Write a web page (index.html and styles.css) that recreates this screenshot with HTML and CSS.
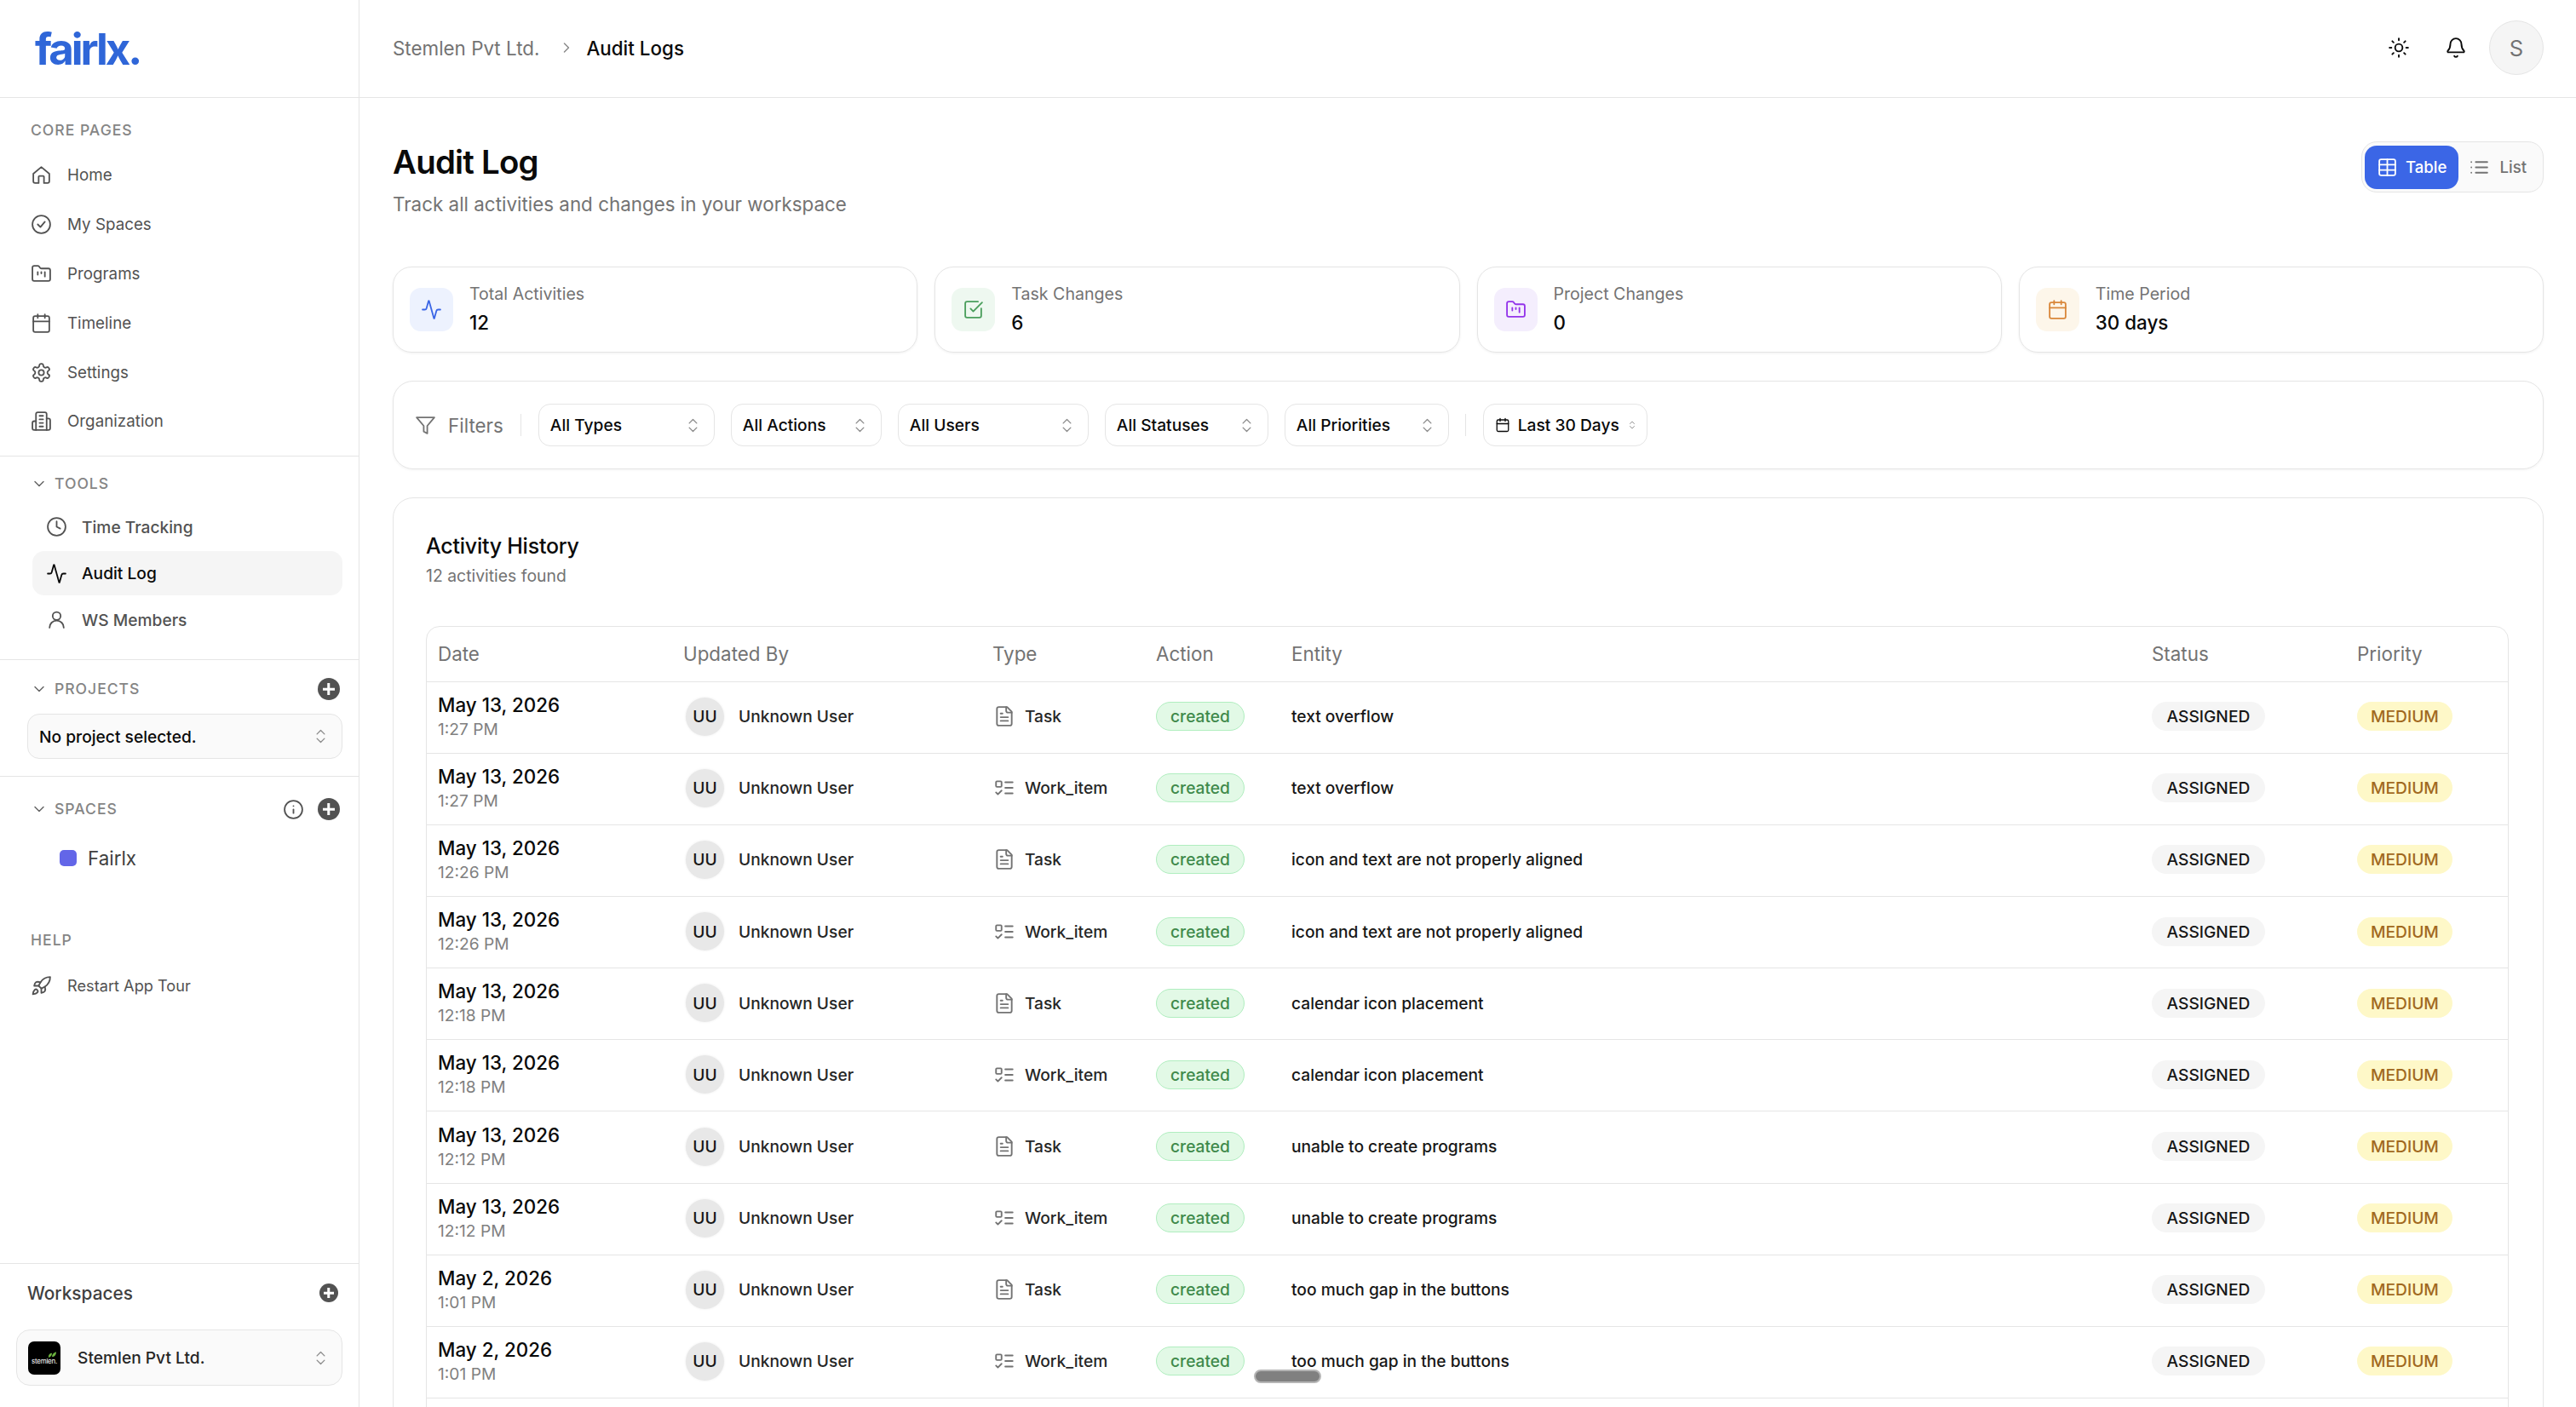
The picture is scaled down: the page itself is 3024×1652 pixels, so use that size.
FILE: index.html
```html
<!DOCTYPE html>
<html lang="en">
<head>
  <meta charset="UTF-8" />
  <title>Audit Log</title>
  <link rel="stylesheet" href="styles.css">
</head>
<body>
  <svg class="sprites" aria-hidden="true">
    <symbol id="i-home" viewBox="0 0 24 24"><path d="M3 10.5 12 3l9 7.5V19a2 2 0 0 1-2 2h-4v-7a1 1 0 0 0-1-1h-4a1 1 0 0 0-1 1v7H5a2 2 0 0 1-2-2z"/></symbol>
    <symbol id="i-check-circle" viewBox="0 0 24 24"><circle cx="12" cy="12" r="10"/><path d="m8 12 3 3 5-6"/></symbol>
    <symbol id="i-folder" viewBox="0 0 24 24"><path d="M4 20h16a2 2 0 0 0 2-2V8a2 2 0 0 0-2-2h-7.93a2 2 0 0 1-1.66-.9l-.82-1.2A2 2 0 0 0 7.93 3H4a2 2 0 0 0-2 2v13c0 1.1.9 2 2 2Z"/><path d="M8 10v3"/><path d="M12 10v1.5"/><path d="M16 10v5"/></symbol>
    <symbol id="i-calendar" viewBox="0 0 24 24"><path d="M8 2v4"/><path d="M16 2v4"/><rect x="3" y="4" width="18" height="18" rx="2"/><path d="M3 10h18"/></symbol>
    <symbol id="i-settings" viewBox="0 0 24 24"><path d="M12.22 2h-.44a2 2 0 0 0-2 2v.18a2 2 0 0 1-1 1.73l-.43.25a2 2 0 0 1-2 0l-.15-.08a2 2 0 0 0-2.73.73l-.22.38a2 2 0 0 0 .73 2.73l.15.1a2 2 0 0 1 1 1.72v.51a2 2 0 0 1-1 1.74l-.15.09a2 2 0 0 0-.73 2.73l.22.38a2 2 0 0 0 2.73.73l.15-.08a2 2 0 0 1 2 0l.43.25a2 2 0 0 1 1 1.73V20a2 2 0 0 0 2 2h.44a2 2 0 0 0 2-2v-.18a2 2 0 0 1 1-1.73l.43-.25a2 2 0 0 1 2 0l.15.08a2 2 0 0 0 2.73-.73l.22-.39a2 2 0 0 0-.73-2.73l-.15-.08a2 2 0 0 1-1-1.74v-.5a2 2 0 0 1 1-1.74l.15-.09a2 2 0 0 0 .73-2.73l-.22-.38a2 2 0 0 0-2.73-.73l-.15.08a2 2 0 0 1-2 0l-.43-.25a2 2 0 0 1-1-1.73V4a2 2 0 0 0-2-2z"/><circle cx="12" cy="12" r="3"/></symbol>
    <symbol id="i-building" viewBox="0 0 24 24"><path d="M6 22V4a2 2 0 0 1 2-2h8a2 2 0 0 1 2 2v18Z"/><path d="M6 12H4a2 2 0 0 0-2 2v6a2 2 0 0 0 2 2h2"/><path d="M18 9h2a2 2 0 0 1 2 2v9a2 2 0 0 1-2 2h-2"/><path d="M10 6h4"/><path d="M10 10h4"/><path d="M10 14h4"/><path d="M10 18h4"/></symbol>
    <symbol id="i-clock" viewBox="0 0 24 24"><circle cx="12" cy="12" r="10"/><path d="M12 6v6l4 2"/></symbol>
    <symbol id="i-activity" viewBox="0 0 24 24"><path d="M22 12h-2.48a2 2 0 0 0-1.93 1.46l-2.35 8.36a.25.25 0 0 1-.48 0L9.24 2.18a.25.25 0 0 0-.48 0l-2.35 8.36A2 2 0 0 1 4.49 12H2"/></symbol>
    <symbol id="i-user" viewBox="0 0 24 24"><circle cx="12" cy="8" r="4.5"/><path d="M20 21a8 8 0 0 0-16 0"/></symbol>
    <symbol id="i-rocket" viewBox="0 0 24 24"><path d="M4.5 16.5c-1.5 1.26-2 5-2 5s3.74-.5 5-2c.71-.84.7-2.13-.09-2.91a2.18 2.18 0 0 0-2.91-.09z"/><path d="m12 15-3-3a22 22 0 0 1 2-3.95A12.88 12.88 0 0 1 22 2c0 2.72-.78 7.5-6 11a22.35 22.35 0 0 1-4 2z"/><path d="M9 12H4s.55-3.03 2-4c1.62-1.08 5 0 5 0"/><path d="M12 15v5s3.03-.55 4-2c1.08-1.62 0-5 0-5"/></symbol>
    <symbol id="i-chev-down" viewBox="0 0 24 24"><path d="m6 9 6 6 6-6"/></symbol>
    <symbol id="i-chev-right" viewBox="0 0 24 24"><path d="m9 18 6-6-6-6"/></symbol>
    <symbol id="i-updown" viewBox="0 0 24 24"><path d="m7 15 5 5 5-5"/><path d="m7 9 5-5 5 5"/></symbol>
    <symbol id="i-info" viewBox="0 0 24 24"><circle cx="12" cy="12" r="10"/><path d="M12 16v-4"/><path d="M12 8h.01"/></symbol>
    <symbol id="i-sun" viewBox="0 0 24 24"><circle cx="12" cy="12" r="4"/><path d="M12 2v2"/><path d="M12 20v2"/><path d="m4.93 4.93 1.41 1.41"/><path d="m17.66 17.66 1.41 1.41"/><path d="M2 12h2"/><path d="M20 12h2"/><path d="m6.34 17.66-1.41 1.41"/><path d="m19.07 4.93-1.41 1.41"/></symbol>
    <symbol id="i-bell" viewBox="0 0 24 24"><path d="M10.268 21a2 2 0 0 0 3.464 0"/><path d="M3.262 15.326A1 1 0 0 0 4 17h16a1 1 0 0 0 .74-1.673C19.41 13.956 18 12.499 18 8A6 6 0 0 0 6 8c0 4.499-1.411 5.956-2.738 7.326"/></symbol>
    <symbol id="i-table" viewBox="0 0 24 24"><path d="M12 3v18"/><rect x="3" y="3" width="18" height="18" rx="2"/><path d="M3 9h18"/><path d="M3 15h18"/></symbol>
    <symbol id="i-list" viewBox="0 0 24 24"><path d="M3 6h.01"/><path d="M3 12h.01"/><path d="M3 18h.01"/><path d="M8 6h13"/><path d="M8 12h13"/><path d="M8 18h13"/></symbol>
    <symbol id="i-square-check" viewBox="0 0 24 24"><path d="M21 10.656V19a2 2 0 0 1-2 2H5a2 2 0 0 1-2-2V5a2 2 0 0 1 2-2h12.344"/><path d="m9 11 3 3L22 4"/></symbol>
    <symbol id="i-funnel" viewBox="0 0 24 24"><path d="M22 3H2l8 9.46V19l4 2v-8.54z"/></symbol>
    <symbol id="i-file" viewBox="0 0 24 24"><path d="M15 2H6a2 2 0 0 0-2 2v16a2 2 0 0 0 2 2h12a2 2 0 0 0 2-2V7Z"/><path d="M14 2v4a2 2 0 0 0 2 2h4"/><path d="M10 9H8"/><path d="M16 13H8"/><path d="M16 17H8"/></symbol>
    <symbol id="i-todo" viewBox="0 0 24 24"><rect x="3" y="5" width="6" height="6" rx="1"/><path d="m3 17 2 2 4-4"/><path d="M13 6h8"/><path d="M13 12h8"/><path d="M13 18h8"/></symbol>
  </svg>

  <div class="app">
    <aside class="sidebar">
      <div class="brand"><span class="brand-name">fairlx.</span></div>

      <section class="side-section core">
        <div class="side-label">CORE PAGES</div>
        <a class="nav-item"><svg class="icon"><use href="#i-home"/></svg>Home</a>
        <a class="nav-item"><svg class="icon"><use href="#i-check-circle"/></svg>My Spaces</a>
        <a class="nav-item"><svg class="icon"><use href="#i-folder"/></svg>Programs</a>
        <a class="nav-item"><svg class="icon"><use href="#i-calendar"/></svg>Timeline</a>
        <a class="nav-item"><svg class="icon"><use href="#i-settings"/></svg>Settings</a>
        <a class="nav-item"><svg class="icon"><use href="#i-building"/></svg>Organization</a>
      </section>

      <section class="side-section tools">
        <div class="side-head"><svg class="icon chev"><use href="#i-chev-down"/></svg><span class="side-label">TOOLS</span></div>
        <a class="tool-item"><svg class="icon"><use href="#i-clock"/></svg>Time Tracking</a>
        <a class="tool-item active"><svg class="icon"><use href="#i-activity"/></svg>Audit Log</a>
        <a class="tool-item"><svg class="icon"><use href="#i-user"/></svg>WS Members</a>
      </section>

      <section class="side-section projects">
        <div class="side-head">
          <svg class="icon chev"><use href="#i-chev-down"/></svg><span class="side-label">PROJECTS</span>
          <span class="plus-btn"></span>
        </div>
        <div class="side-select"><span>No project selected.</span><svg class="icon updown"><use href="#i-updown"/></svg></div>
      </section>

      <section class="side-section spaces">
        <div class="side-head">
          <svg class="icon chev"><use href="#i-chev-down"/></svg><span class="side-label">SPACES</span>
          <svg class="icon info"><use href="#i-info"/></svg>
          <span class="plus-btn"></span>
        </div>
        <div class="space-row"><span class="space-dot"></span>Fairlx</div>
      </section>

      <section class="side-section help">
        <div class="side-label">HELP</div>
        <a class="nav-item"><svg class="icon"><use href="#i-rocket"/></svg>Restart App Tour</a>
      </section>

      <section class="workspaces">
        <div class="ws-head"><span>Workspaces</span><span class="plus-btn small"></span></div>
        <div class="ws-select">
          <span class="ws-logo">
            <svg class="leaf" viewBox="0 0 12 8"><path d="M1 8C1 4 3 2 6 2 6 5 4 8 1 8Z"/><path d="M6 7c0-3 2-6 6-7 0 4-2 7-6 7Z"/></svg>
            <span class="ws-logo-text">stemlen.</span>
          </span>
          <span class="ws-name">Stemlen Pvt Ltd.</span>
          <svg class="icon updown"><use href="#i-updown"/></svg>
        </div>
      </section>
    </aside>

    <main class="main">
      <header class="topbar">
        <nav class="crumbs">
          <span class="crumb">Stemlen Pvt Ltd.</span>
          <svg class="icon crumb-sep"><use href="#i-chev-right"/></svg>
          <span class="crumb current">Audit Logs</span>
        </nav>
        <div class="top-actions">
          <svg class="icon top-icon"><use href="#i-sun"/></svg>
          <svg class="icon top-icon"><use href="#i-bell"/></svg>
          <span class="user-avatar">S</span>
        </div>
      </header>

      <div class="content">
        <div class="page-head">
          <div>
            <h1>Audit Log</h1>
            <p class="page-sub">Track all activities and changes in your workspace</p>
          </div>
          <div class="view-toggle">
            <span class="view-btn active"><svg class="icon"><use href="#i-table"/></svg>Table</span>
            <span class="view-btn"><svg class="icon"><use href="#i-list"/></svg>List</span>
          </div>
        </div>

        <div class="stats">
          <div class="stat-card">
            <span class="stat-icon blue"><svg class="icon"><use href="#i-activity"/></svg></span>
            <div><div class="stat-label">Total Activities</div><div class="stat-value">12</div></div>
          </div>
          <div class="stat-card">
            <span class="stat-icon green"><svg class="icon"><use href="#i-square-check"/></svg></span>
            <div><div class="stat-label">Task Changes</div><div class="stat-value">6</div></div>
          </div>
          <div class="stat-card">
            <span class="stat-icon purple"><svg class="icon"><use href="#i-folder"/></svg></span>
            <div><div class="stat-label">Project Changes</div><div class="stat-value">0</div></div>
          </div>
          <div class="stat-card">
            <span class="stat-icon orange"><svg class="icon"><use href="#i-calendar"/></svg></span>
            <div><div class="stat-label">Time Period</div><div class="stat-value">30 days</div></div>
          </div>
        </div>

        <div class="filters">
          <svg class="icon funnel"><use href="#i-funnel"/></svg>
          <span class="filters-title">Filters</span>
          <span class="filters-sep"></span>
          <div class="filter-select f-types"><span>All Types</span><svg class="icon updown"><use href="#i-updown"/></svg></div>
          <div class="filter-select f-actions"><span>All Actions</span><svg class="icon updown"><use href="#i-updown"/></svg></div>
          <div class="filter-select f-users"><span>All Users</span><svg class="icon updown"><use href="#i-updown"/></svg></div>
          <div class="filter-select f-statuses"><span>All Statuses</span><svg class="icon updown"><use href="#i-updown"/></svg></div>
          <div class="filter-select f-priorities"><span>All Priorities</span><svg class="icon updown"><use href="#i-updown"/></svg></div>
          <span class="filters-sep short"></span>
          <div class="filter-select f-date"><svg class="icon cal"><use href="#i-calendar"/></svg><span>Last 30 Days</span><svg class="icon updown tiny"><use href="#i-updown"/></svg></div>
        </div>

        <div class="history">
          <h2>Activity History</h2>
          <p class="history-sub">12 activities found</p>
          <div class="table-wrap">
            <table class="log-table">
              <colgroup>
                <col class="c-date"><col class="c-user"><col class="c-type"><col class="c-action"><col class="c-entity"><col class="c-status"><col class="c-priority">
              </colgroup>
              <thead>
                <tr><th>Date</th><th>Updated By</th><th>Type</th><th>Action</th><th>Entity</th><th>Status</th><th>Priority</th></tr>
              </thead>
              <tbody>
                <tr>
                  <td><div class="date">May 13, 2026</div><div class="time">1:27 PM</div></td>
                  <td><div class="who"><span class="avatar">UU</span>Unknown User</div></td>
                  <td><div class="kind"><svg class="icon"><use href="#i-file"/></svg>Task</div></td>
                  <td><span class="pill created">created</span></td>
                  <td class="entity">text overflow</td>
                  <td><span class="pill assigned">ASSIGNED</span></td>
                  <td><span class="pill medium">MEDIUM</span></td>
                </tr>
                <tr>
                  <td><div class="date">May 13, 2026</div><div class="time">1:27 PM</div></td>
                  <td><div class="who"><span class="avatar">UU</span>Unknown User</div></td>
                  <td><div class="kind"><svg class="icon"><use href="#i-todo"/></svg>Work_item</div></td>
                  <td><span class="pill created">created</span></td>
                  <td class="entity">text overflow</td>
                  <td><span class="pill assigned">ASSIGNED</span></td>
                  <td><span class="pill medium">MEDIUM</span></td>
                </tr>
                <tr>
                  <td><div class="date">May 13, 2026</div><div class="time">12:26 PM</div></td>
                  <td><div class="who"><span class="avatar">UU</span>Unknown User</div></td>
                  <td><div class="kind"><svg class="icon"><use href="#i-file"/></svg>Task</div></td>
                  <td><span class="pill created">created</span></td>
                  <td class="entity">icon and text are not properly aligned</td>
                  <td><span class="pill assigned">ASSIGNED</span></td>
                  <td><span class="pill medium">MEDIUM</span></td>
                </tr>
                <tr>
                  <td><div class="date">May 13, 2026</div><div class="time">12:26 PM</div></td>
                  <td><div class="who"><span class="avatar">UU</span>Unknown User</div></td>
                  <td><div class="kind"><svg class="icon"><use href="#i-todo"/></svg>Work_item</div></td>
                  <td><span class="pill created">created</span></td>
                  <td class="entity">icon and text are not properly aligned</td>
                  <td><span class="pill assigned">ASSIGNED</span></td>
                  <td><span class="pill medium">MEDIUM</span></td>
                </tr>
                <tr>
                  <td><div class="date">May 13, 2026</div><div class="time">12:18 PM</div></td>
                  <td><div class="who"><span class="avatar">UU</span>Unknown User</div></td>
                  <td><div class="kind"><svg class="icon"><use href="#i-file"/></svg>Task</div></td>
                  <td><span class="pill created">created</span></td>
                  <td class="entity">calendar icon placement</td>
                  <td><span class="pill assigned">ASSIGNED</span></td>
                  <td><span class="pill medium">MEDIUM</span></td>
                </tr>
                <tr>
                  <td><div class="date">May 13, 2026</div><div class="time">12:18 PM</div></td>
                  <td><div class="who"><span class="avatar">UU</span>Unknown User</div></td>
                  <td><div class="kind"><svg class="icon"><use href="#i-todo"/></svg>Work_item</div></td>
                  <td><span class="pill created">created</span></td>
                  <td class="entity">calendar icon placement</td>
                  <td><span class="pill assigned">ASSIGNED</span></td>
                  <td><span class="pill medium">MEDIUM</span></td>
                </tr>
                <tr>
                  <td><div class="date">May 13, 2026</div><div class="time">12:12 PM</div></td>
                  <td><div class="who"><span class="avatar">UU</span>Unknown User</div></td>
                  <td><div class="kind"><svg class="icon"><use href="#i-file"/></svg>Task</div></td>
                  <td><span class="pill created">created</span></td>
                  <td class="entity">unable to create programs</td>
                  <td><span class="pill assigned">ASSIGNED</span></td>
                  <td><span class="pill medium">MEDIUM</span></td>
                </tr>
                <tr>
                  <td><div class="date">May 13, 2026</div><div class="time">12:12 PM</div></td>
                  <td><div class="who"><span class="avatar">UU</span>Unknown User</div></td>
                  <td><div class="kind"><svg class="icon"><use href="#i-todo"/></svg>Work_item</div></td>
                  <td><span class="pill created">created</span></td>
                  <td class="entity">unable to create programs</td>
                  <td><span class="pill assigned">ASSIGNED</span></td>
                  <td><span class="pill medium">MEDIUM</span></td>
                </tr>
                <tr>
                  <td><div class="date">May 2, 2026</div><div class="time">1:01 PM</div></td>
                  <td><div class="who"><span class="avatar">UU</span>Unknown User</div></td>
                  <td><div class="kind"><svg class="icon"><use href="#i-file"/></svg>Task</div></td>
                  <td><span class="pill created">created</span></td>
                  <td class="entity">too much gap in the buttons</td>
                  <td><span class="pill assigned">ASSIGNED</span></td>
                  <td><span class="pill medium">MEDIUM</span></td>
                </tr>
                <tr>
                  <td><div class="date">May 2, 2026</div><div class="time">1:01 PM</div></td>
                  <td><div class="who"><span class="avatar">UU</span>Unknown User</div></td>
                  <td><div class="kind"><svg class="icon"><use href="#i-todo"/></svg>Work_item</div></td>
                  <td><span class="pill created">created</span></td>
                  <td class="entity">too much gap in the buttons</td>
                  <td><span class="pill assigned">ASSIGNED</span></td>
                  <td><span class="pill medium">MEDIUM</span></td>
                </tr>
                <tr><td colspan="7"></td></tr>
              </tbody>
            </table>
          </div>
        </div>
      </div>
    </main>
  </div>

  <div class="scroll-thumb"></div>
</body>
</html>
```

FILE: styles.css
```css
* { box-sizing: border-box; }

html, body {
  margin: 0;
  height: 100%;
  overflow: hidden;
}

body {
  font-family: Inter, "Noto Sans", sans-serif;
  background: #fff;
  color: #0a0a0a;
}

.sprites { display: none; }

.icon {
  width: 25px;
  height: 25px;
  flex: none;
  fill: none;
  stroke: currentColor;
  stroke-width: 1.75;
  stroke-linecap: round;
  stroke-linejoin: round;
}

.app {
  display: flex;
  height: 100vh;
}

/* sidebar */
.sidebar {
  width: 422px;
  flex: none;
  display: flex;
  flex-direction: column;
  border-right: 1px solid #e5e5e5;
  color: #525252;
}

.brand {
  height: 115px;
  flex: none;
  padding-left: 41px;
  display: flex;
  align-items: center;
  border-bottom: 1px solid #e5e5e5;
}

.brand-name {
  font-size: 51px;
  line-height: 1;
  font-weight: 700;
  letter-spacing: -0.06em;
  color: #2f66d8;
}

.side-section { border-bottom: 1px solid #e5e5e5; flex: none; }

.side-label {
  font-size: 17.6px;
  line-height: 26px;
  font-weight: 500;
  letter-spacing: 0.055em;
  color: #858585;
}

.side-head {
  display: flex;
  align-items: center;
  height: 26px;
  padding-left: 36px;
  padding-right: 22px;
}

.side-head .chev {
  width: 20px;
  height: 20px;
  color: #666;
  margin-right: 8px;
}

.core { padding: 25px 0 11px 36px; }
.core .side-label { margin-bottom: 11px; }

.nav-item {
  display: flex;
  align-items: center;
  gap: 18px;
  height: 57.8px;
  font-size: 18.8px;
  font-weight: 400;
}

.tools { padding: 19px 19px 18px 0; }
.tools .side-head { margin-bottom: 12px; }

.tool-item {
  display: flex;
  align-items: center;
  gap: 17px;
  height: 52px;
  margin: 0 0 2.5px 38px;
  padding-left: 16px;
  border-radius: 14px;
  font-size: 19.2px;
  font-weight: 450;
}

.tool-item.active {
  background: #f5f5f5;
  color: #0a0a0a;
}

.projects { padding-top: 21px; padding-bottom: 20px; }

.plus-btn {
  position: relative;
  width: 26px;
  height: 26px;
  margin-left: auto;
  border-radius: 50%;
  background: #525252;
  flex: none;
}

.plus-btn::before,
.plus-btn::after {
  content: "";
  position: absolute;
  left: 50%;
  top: 50%;
  width: 14px;
  height: 2.5px;
  background: #fff;
  transform: translate(-50%, -50%);
}

.plus-btn::after { transform: translate(-50%, -50%) rotate(90deg); }

.plus-btn.small { width: 22px; height: 22px; }
.plus-btn.small::before,
.plus-btn.small::after { width: 12px; }

.side-select {
  display: flex;
  align-items: center;
  justify-content: space-between;
  height: 53px;
  margin: 16px 19px 0 32px;
  padding: 0 14px 0 13px;
  border: 1px solid #e5e5e5;
  border-radius: 14px;
  background: #fafafa;
  color: #0a0a0a;
  font-size: 19.2px;
  font-weight: 450;
}

.updown {
  width: 21px;
  height: 21px;
  color: #8a8a8a;
  stroke-width: 1.5;
}

.spaces { padding: 25px 0 0; border-bottom: none; }
.spaces .info { margin-left: auto; margin-right: 16px; color: #525252; }
.spaces .plus-btn { margin-left: 0; }

.space-row {
  display: flex;
  align-items: center;
  gap: 13px;
  margin-top: 31px;
  padding-left: 70px;
  height: 26px;
  font-size: 22.4px;
  color: #404040;
}

.space-dot {
  width: 20px;
  height: 19px;
  border-radius: 5px;
  background: #6366e8;
}

.help {
  padding: 71px 0 0 36px;
  border-bottom: none;
}

.help .nav-item { margin-top: 14px; height: 52px; font-size: 18.2px; }

.workspaces {
  margin-top: auto;
  padding: 0 19px 25px;
  border-top: 1px solid #e5e5e5;
}

.ws-head {
  display: flex;
  align-items: center;
  justify-content: space-between;
  height: 32px;
  margin-top: 18px;
  padding: 0 5px 0 13px;
  font-size: 20.8px;
  font-weight: 500;
  color: #404040;
}

.ws-select {
  display: flex;
  align-items: center;
  height: 66px;
  margin-top: 27px;
  padding: 0 14px 0 13px;
  border: 1px solid #e5e5e5;
  border-radius: 16px;
  background: #fafafa;
}

.ws-logo {
  width: 38px;
  height: 39px;
  flex: none;
  border-radius: 7px;
  background: #000;
  display: flex;
  flex-direction: column;
  align-items: center;
  justify-content: center;
}

.leaf { width: 10px; height: 7px; margin-left: 18px; fill: #6cb33f; }

.ws-logo-text {
  font-size: 8px;
  line-height: 8px;
  letter-spacing: -0.03em;
  color: #fff;
}

.ws-name {
  margin-left: 20px;
  font-size: 19.2px;
  font-weight: 450;
  color: #262626;
}

.ws-select .updown { margin-left: auto; }

/* main */
.main {
  flex: 1;
  min-width: 0;
  overflow: hidden;
  display: flex;
  flex-direction: column;
}

.topbar {
  height: 115px;
  flex: none;
  display: flex;
  align-items: center;
  justify-content: space-between;
  padding: 0 38px 2px 39px;
  border-bottom: 1px solid #e5e5e5;
}

.crumbs { display: flex; align-items: center; }

.crumb { font-size: 22.4px; color: #737373; }
.crumb.current { color: #0a0a0a; font-weight: 500; }

.crumb-sep { width: 20px; height: 20px; margin: 0 13px 0 22px; color: #8a8a8a; }

.top-actions { display: flex; align-items: center; }

.top-icon { width: 26px; height: 26px; color: #0a0a0a; margin-right: 41px; }
.top-icon + .top-icon { margin-right: 26px; }

.user-avatar {
  width: 64px;
  height: 64px;
  border-radius: 50%;
  border: 1px solid #e5e5e5;
  background: #f5f5f5;
  color: #737373;
  font-size: 25.6px;
  display: flex;
  align-items: center;
  justify-content: center;
}

.content { padding: 50px 38px 0 39px; }

.page-head {
  display: flex;
  justify-content: space-between;
  align-items: flex-start;
  height: 148px;
}

h1 {
  margin: 0;
  font-size: 38.4px;
  line-height: 51px;
  font-weight: 600;
  letter-spacing: -0.02em;
}

.page-sub {
  margin: 8px 0 0;
  font-size: 22.4px;
  line-height: 32px;
  color: #737373;
}

.view-toggle {
  display: flex;
  align-items: center;
  height: 60px;
  margin-top: 1px;
  padding: 0 3px;
  border: 1px solid #e5e5e5;
  border-radius: 18px;
  background: #fafafa;
}

.view-btn {
  display: flex;
  align-items: center;
  gap: 11px;
  height: 51px;
  padding: 0 16px 0 12px;
  border-radius: 14px;
  font-size: 18.6px;
  font-weight: 500;
  color: #737373;
}

.view-btn.active {
  gap: 9px;
  padding: 0 14px;
  background: #3b66e6;
  color: #fff;
}

.stats {
  display: grid;
  grid-template-columns: repeat(4, 1fr);
  gap: 20px;
}

.stat-card {
  height: 101px;
  display: flex;
  align-items: center;
  gap: 19px;
  padding: 0 19px;
  border: 1px solid #e5e5e5;
  border-radius: 22px;
  box-shadow: 0 1px 3px rgba(0, 0, 0, 0.06);
}

.stat-icon {
  width: 51px;
  height: 51px;
  flex: none;
  border-radius: 13px;
  display: flex;
  align-items: center;
  justify-content: center;
}

.stat-icon.blue { background: #edf2fe; color: #3b66e6; }
.stat-icon.green { background: #eef8f0; color: #4a9e5c; }
.stat-icon.purple { background: #f4eefd; color: #9333ea; }
.stat-icon.orange { background: #fdf6ea; color: #d9873a; }

.stat-label { font-size: 19.6px; line-height: 28px; color: #737373; margin-top: -1px; }
.stat-value { margin-top: 4px; font-size: 22.4px; line-height: 32px; font-weight: 500; }

.filters {
  height: 104px;
  margin-top: 33px;
  display: flex;
  align-items: center;
  padding: 0 25px;
  border: 1px solid #e5e5e5;
  border-radius: 24px;
  box-shadow: 0 1px 3px rgba(0, 0, 0, 0.05);
}

.funnel { color: #737373; }

.filters-title {
  margin-left: 14px;
  font-size: 22.4px;
  color: #737373;
}

.filters-sep {
  width: 1px;
  height: 26px;
  margin: 0 20px;
  background: #e5e5e5;
}

.filters-sep.short { margin: 0 20px 0 -1px; }

.filter-select {
  height: 50px;
  display: flex;
  align-items: center;
  justify-content: space-between;
  margin-right: 19px;
  padding: 0 14px 0 13px;
  border: 1px solid #e5e5e5;
  border-radius: 14px;
  font-size: 19.2px;
  font-weight: 450;
}

.f-types { width: 207px; }
.f-actions { width: 177px; }
.f-users { width: 224px; }
.f-statuses { width: 192px; }
.f-priorities { width: 193px; margin-right: 20px; }
.f-date { width: 193px; padding: 0 11px 0 13px; }

.filter-select .cal { width: 18px; height: 18px; }
.filter-select .tiny { width: 12px; height: 18px; color: #737373; }

.history {
  margin-top: 33px;
  height: 1200px;
  padding: 38px 40px 0 38px;
  border: 1px solid #e5e5e5;
  border-radius: 24px;
}

h2 {
  margin: 0;
  font-size: 25px;
  line-height: 36px;
  font-weight: 500;
  letter-spacing: -0.01em;
}

.history-sub {
  margin: 3px 0 0;
  font-size: 19.4px;
  line-height: 28px;
  color: #737373;
}

.table-wrap {
  margin-top: 45px;
  border: 1px solid #e5e5e5;
  border-radius: 16px;
  overflow: hidden;
}

.log-table {
  width: 100%;
  border-collapse: collapse;
  table-layout: fixed;
}

.c-date { width: 288px; }
.c-user { width: 363px; }
.c-type { width: 192px; }
.c-action { width: 159px; }
.c-status { width: 241px; }
.c-priority { width: 190px; }

.log-table th {
  height: 64px;
  padding: 0 0 0 13px;
  text-align: left;
  font-size: 22.4px;
  font-weight: 400;
  color: #737373;
  border-bottom: 1px solid #e5e5e5;
}

.log-table td {
  height: 84.16px;
  padding: 0 0 2px 13px;
  vertical-align: middle;
  font-size: 19.2px;
  font-weight: 450;
  border-bottom: 1px solid #e5e5e5;
}

.date { font-size: 22.4px; line-height: 28px; font-weight: 500; }
.time { margin-top: 1px; font-size: 19.2px; line-height: 26px; font-weight: 400; color: #808080; }

.who { display: flex; align-items: center; gap: 17px; padding-left: 3px; color: #262626; }

.avatar {
  width: 45px;
  height: 45px;
  flex: none;
  border-radius: 50%;
  background: #e8e8e8;
  box-shadow: 0 0 3px rgba(0, 0, 0, 0.08);
  color: #171717;
  font-size: 19.2px;
  font-weight: 500;
  display: flex;
  align-items: center;
  justify-content: center;
}

.kind { display: flex; align-items: center; gap: 11px; padding-left: 1px; color: #262626; }
.kind .icon { width: 26px; height: 26px; color: #737373; }

.pill {
  display: inline-flex;
  align-items: center;
  height: 34px;
  padding: 0 16px;
  border-radius: 17px;
  font-size: 19.2px;
  font-weight: 450;
}

.pill.created {
  background: #e2f9e6;
  border: 1px solid #b0eebf;
  color: #3f8a4c;
}

.pill.assigned { padding: 0 17.5px; background: #f5f5f5; color: #171717; }
.pill.medium { background: #fef8c8; color: #a1691f; }

.entity { color: #171717; }

/* macOS overlay scrollbar caught in the shot */
.scroll-thumb {
  position: absolute;
  left: 1472px;
  top: 1608px;
  width: 79px;
  height: 16px;
  border-radius: 8px;
  background: #808080;
  border: 2px solid #b5b5b5;
}
```
